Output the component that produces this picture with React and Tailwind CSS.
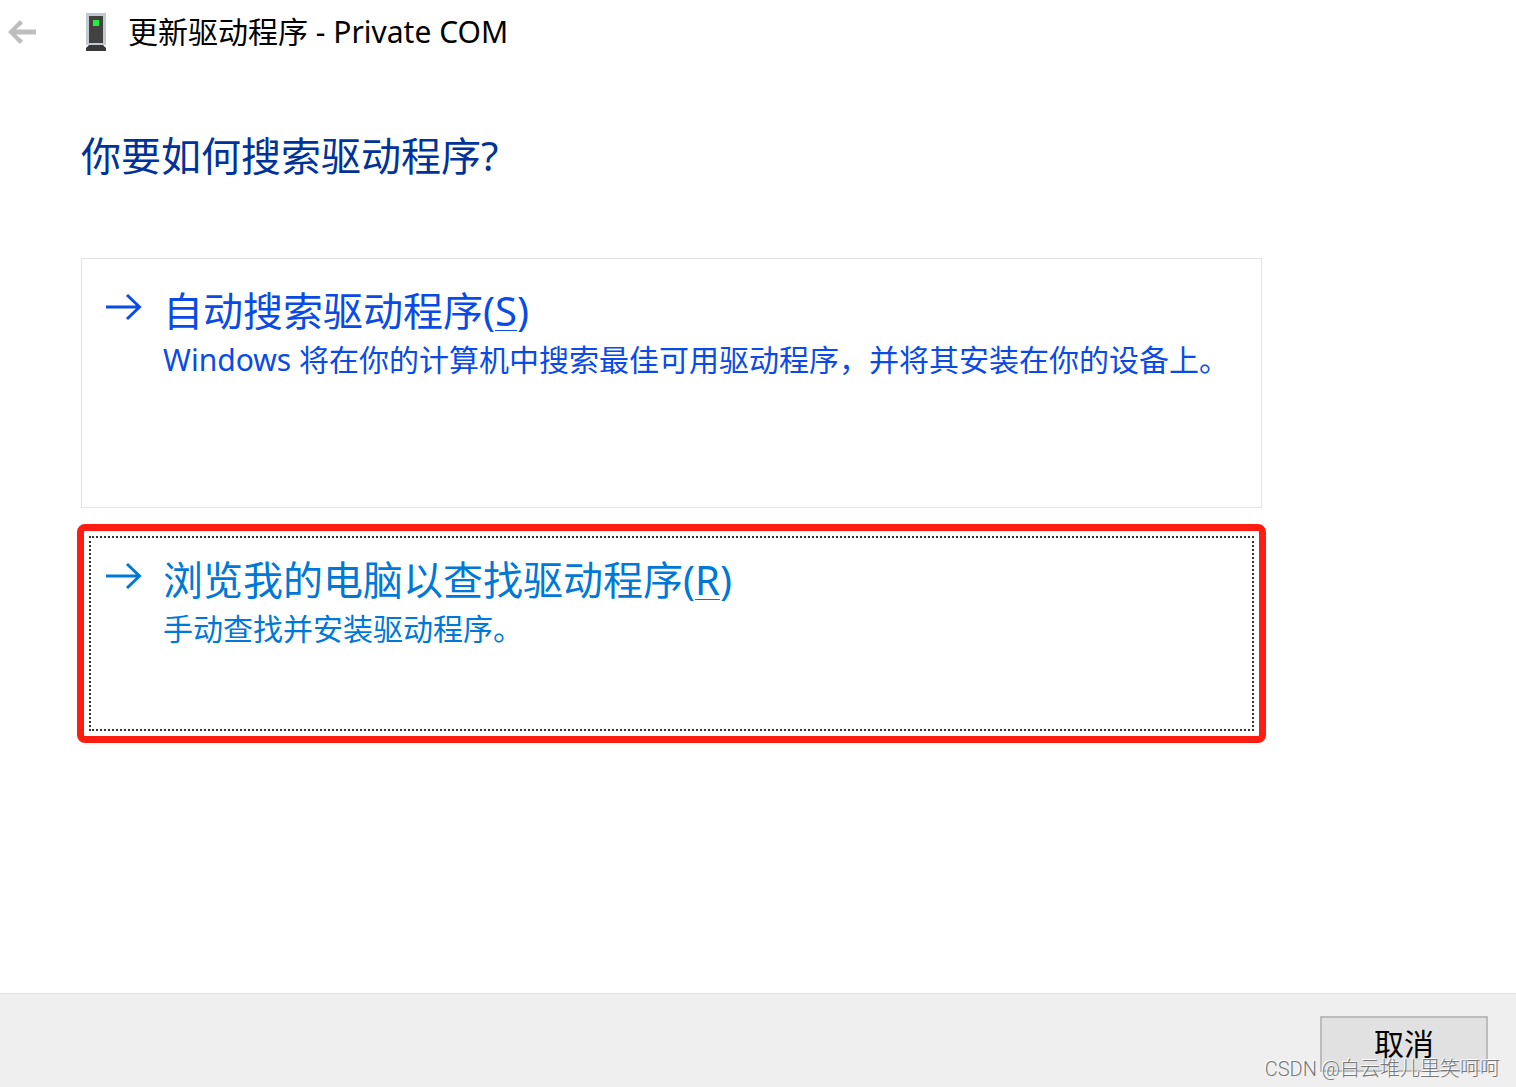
const commands = [
  {
    title: '自动搜索驱动程序',
    accessKey: 'S',
    text: 'Windows 将在你的计算机中搜索最佳可用驱动程序，并将其安装在你的设备上。',
    focused: false
  },
  {
    title: '浏览我的电脑以查找驱动程序',
    accessKey: 'R',
    text: '手动查找并安装驱动程序。',
    focused: true
  }
];

function BackIcon() {
  return (
    <svg width="30" height="24" viewBox="0 0 30 24">
      <path fill="#bdbdbd" d="M1 12 13 0l3 3.5-7 6h20v5H9l7 6-3 3.5z" />
    </svg>
  );
}

function DeviceIcon() {
  return (
    <svg width="20" height="38" viewBox="0 0 20 38">
      <path fill="#c3c9d1" d="M0 0h20v32H0z" />
      <path fill="#424242" d="M3 3h14v27H3z" />
      <path fill="#22f03a" d="M7 7h6v6H7z" />
      <path fill="#383838" d="M3 32h14l3 3v3H0v-3z" />
    </svg>
  );
}

function ArrowIcon() {
  return (
    <svg className="shrink-0" width="36" height="28" viewBox="0 0 36 28" fill="none" stroke="currentColor" strokeWidth="3">
      <path d="M0 14h34M21 2l12.5 12L21 26" />
    </svg>
  );
}

function CommandLink({ title, accessKey, text, focused }) {
  const button = (
    <button
      type="button"
      className={
        focused
          ? 'flex min-h-[195px] w-full items-start gap-[21px] border-2 border-dotted border-[#333] px-[15px] pt-4 text-left text-[#0078d7]'
          : 'flex min-h-[250px] w-full items-start gap-[21px] border border-[#e3e3e3] pl-6 pr-4 pt-[26px] text-left text-[#0a4be6]'
      }
    >
      <span className="pt-2">
        <ArrowIcon />
      </span>
      <span>
        <span className="block text-[40px] leading-[52px]">
          {title}(<span className="underline decoration-1 underline-offset-4">{accessKey}</span>)
        </span>
        <span className="block text-[30px] leading-[46px]">{text}</span>
      </span>
    </button>
  );

  // the recommended choice is circled in red
  if (focused) {
    return <div className="-mx-1 rounded-lg border-[7px] border-[#ff1c10] p-[5px]">{button}</div>;
  }
  return button;
}

export default function App() {
  return (
    <div className="relative flex min-h-screen flex-col bg-white font-['Noto_Sans','Noto_Sans_CJK_SC',sans-serif] text-black">
      <header className="flex h-16 items-center pl-[7px]">
        <button type="button" aria-label="返回">
          <BackIcon />
        </button>
        <div className="flex items-center gap-[22px] pl-[49px]">
          <DeviceIcon />
          <h1 className="text-[30px] leading-10">更新驱动程序 - Private COM</h1>
        </div>
      </header>

      <main className="flex-1 pl-[81px] pr-[254px] pt-16">
        <h2 className="text-[40px] leading-[56px] text-[#003399]">你要如何搜索驱动程序?</h2>
        <div className="flex flex-col gap-4 pt-[74px]">
          {commands.map((command) => (
            <CommandLink key={command.accessKey} {...command} />
          ))}
        </div>
      </main>

      <footer className="flex h-[94px] items-start justify-end border-t border-[#dfdfdf] bg-[#efefef] pr-7 pt-[22px]">
        <button type="button" className="h-14 w-[168px] border-2 border-[#bcbcbc] bg-[#e1e1e1] text-[30px] leading-10">
          取消
        </button>
      </footer>

      <p className="absolute bottom-1 right-4 font-['Roboto','Noto_Sans_CJK_SC',sans-serif] text-[20px] font-light leading-7 text-[#777] [text-shadow:-1px_-1px_0_#fff]">
        CSDN @白云堆儿里笑呵呵
      </p>
    </div>
  );
}
